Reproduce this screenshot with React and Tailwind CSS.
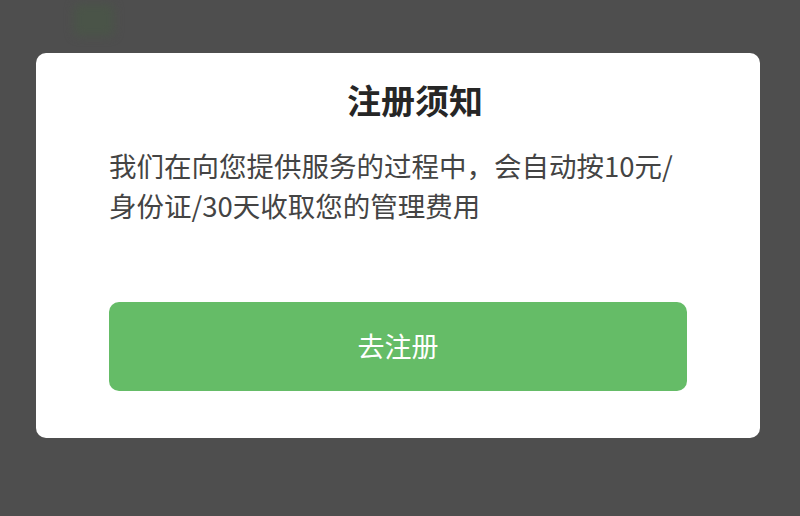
import React from "react";

const App = () => {
  return (
    <div
      className="relative w-[800px] h-[516px] overflow-hidden bg-[#4e4e4e]"
      style={{ fontFamily: '"Noto Sans CJK SC", "Noto Sans", sans-serif' }}
    >
      {/* faint thing behind the overlay */}
      <div className="absolute left-[74px] top-[4px] w-[40px] h-[32px] rounded-md bg-[#4a5448] blur-[5px]" />

      <div className="relative mt-[53px] ml-[36px] w-[724px] h-[385px] bg-white rounded-[10px] px-[73px] pt-[24px]">
        <h2 className="text-center pl-[34px] text-[34px] leading-[46px] font-bold text-[#262626]">
          注册须知
        </h2>

        <p className="mt-[22px] text-[27.5px] leading-[40px] text-[#444]">
          我们在向您提供服务的过程中，会自动按10元/
          <br />
          身份证/30天收取您的管理费用
        </p>

        <button className="mt-[77px] w-full h-[89px] rounded-[10px] bg-[#65bc67] text-white text-[27px] flex items-center justify-center">
          去注册
        </button>
      </div>
    </div>
  );
};

export default App;
